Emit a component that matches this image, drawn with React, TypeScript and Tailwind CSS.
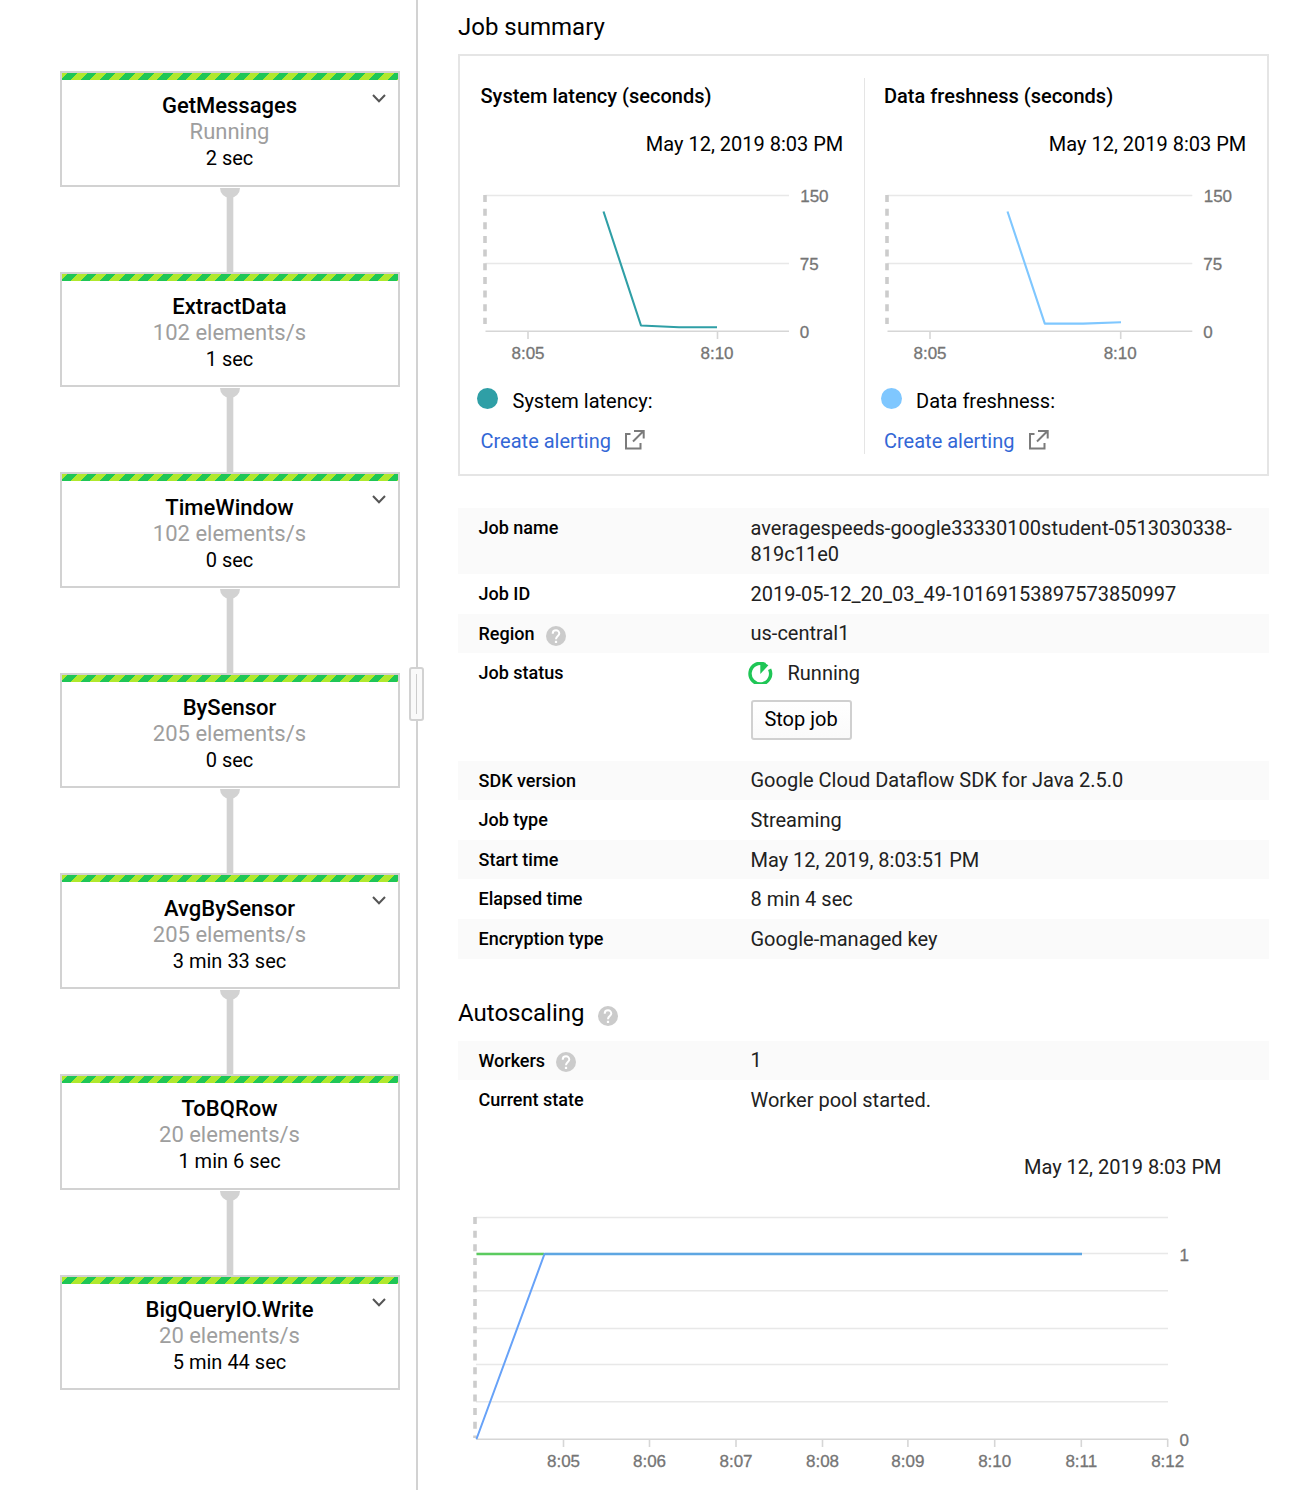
import React from "react";

const nodes = [
  { name: "GetMessages", rate: "Running", time: "2 sec", open: true },
  { name: "ExtractData", rate: "102 elements/s", time: "1 sec", open: false },
  { name: "TimeWindow", rate: "102 elements/s", time: "0 sec", open: true },
  { name: "BySensor", rate: "205 elements/s", time: "0 sec", open: false },
  { name: "AvgBySensor", rate: "205 elements/s", time: "3 min 33 sec", open: true },
  { name: "ToBQRow", rate: "20 elements/s", time: "1 min 6 sec", open: false },
  { name: "BigQueryIO.Write", rate: "20 elements/s", time: "5 min 44 sec", open: true },
];

function Node({ n, last }: { n: (typeof nodes)[number]; last: boolean }) {
  return (
    <>
      <div className="relative flex h-[115.6px] w-[340px] shrink-0 flex-col border-2 border-[#d2d2d2] text-center">
        <div className="h-[7px] shrink-0 bg-[repeating-linear-gradient(135deg,#b0e82d_0px,#b0e82d_4.1px,#1fc656_4.1px,#1fc656_10.9px,#b0e82d_10.9px,#b0e82d_13.58px)]" />
        <div className="mt-[13.4px] pr-px text-[22px] font-medium leading-[26px] text-black">{n.name}</div>
        <div className="pr-px text-[22px] leading-[26px] text-[#9e9e9e]">{n.rate}</div>
        <div className="pr-px text-[20px] leading-[27px] text-black">{n.time}</div>
        {n.open && (
          <svg className="absolute right-[12px] top-[20px]" width="14" height="11" viewBox="0 0 14 11">
            <path d="M1 2 L7 8.3 L13 2" fill="none" stroke="#555" strokeWidth="2" />
          </svg>
        )}
      </div>
      {!last && (
        <svg className="shrink-0" width="22" height="85" viewBox="0 0 22 85">
          <path d="M1 1 A10 10 0 0 0 21 1 Z" fill="#d2d2d2" />
          <rect x="7.7" y="10" width="6.6" height="76" fill="#d2d2d2" />
        </svg>
      )}
    </>
  );
}

function Help() {
  return (
    <svg width="20" height="20" viewBox="0 0 20 20" className="shrink-0">
      <circle cx="10" cy="10" r="10" fill="#cbcbcb" />
      <path d="M6.7 7.7 C6.7 3.2 13.3 3.2 13.3 7.6 C13.3 10 10 10.2 10 13.2" fill="none" stroke="#fff" strokeWidth="2" />
      <rect x="8.9" y="14.8" width="2.2" height="2.2" fill="#fff" />
    </svg>
  );
}

type MetricProps = {
  title: string;
  label: string;
  color: string;
  box: string;
  inset: string;
  dotInset: string;
  x0: number;
  end: number;
  tick: number;
  labelX: number;
  points: string;
};

function MetricCard({ title, label, color, box, inset, dotInset, x0, end, tick, labelX, points }: MetricProps) {
  return (
    <div className={`flex shrink-0 flex-col ${box}`}>
      <h3 className={`mt-[6px] text-[20px] font-medium leading-6 ${inset}`}>{title}</h3>
      <div className="mt-6 pr-[20.7px] text-right text-[20px] leading-6">May 12, 2019 8:03 PM</div>
      <svg className="mt-[21px] block" width="402" height="190" viewBox="0 177 402 190" fontFamily="Liberation Sans" fontSize="17" fill="#757575">
        <path d={`M${x0} 195.5 H${end} M${x0} 263.5 H${end}`} stroke="#e8e8e8" strokeWidth="1.5" />
        <path d={`M${x0} 331.3 H${end} M${x0 + 42.5} 331 V339 M${tick} 331 V339`} stroke="#d6d6d6" strokeWidth="1.6" />
        <path d={`M${x0 - 0.5} 195 V324`} stroke="#ccc" strokeWidth="3.6" strokeDasharray="7 6.65" />
        <path d={points} fill="none" stroke={color} strokeWidth="2.1" strokeLinejoin="round" />
        <g stroke="#757575" strokeWidth="0.3">
          <text x={labelX} y="202">150</text>
          <text x={labelX - 0.5} y="270">75</text>
          <text x={labelX - 0.5} y="338">0</text>
          <text x={x0 + 42.5} y="359" textAnchor="middle">8:05</text>
          <text x={tick - 0.5} y="359" textAnchor="middle">8:10</text>
        </g>
      </svg>
      <div className={`mt-[22px] flex h-6 items-center text-[20px] leading-6 ${dotInset}`}>
        <svg className="-mt-[5px] mr-[14.5px] block" width="21" height="21">
          <circle cx="10.5" cy="10.5" r="10.5" fill={color} />
        </svg>
        {label}
      </div>
      <div className={`mt-4 flex h-6 items-center text-[20px] leading-6 text-[#3367d6] ${inset}`}>
        Create alerting
        <svg className="-mt-[3px] ml-[14px] block" width="20" height="20" viewBox="0 0 20 20" fill="none" stroke="#7b7b7b" strokeWidth="2">
          <path d="M5.5 4 H1 V18.5 H15.5 V13 M9 1 H18.7 V8.5 M18 1.5 L8 11.5" />
        </svg>
      </div>
    </div>
  );
}

type RowProps = { label: string; help?: string; gray?: boolean; up?: boolean; h: string; children: React.ReactNode };

function Row({ label, help, gray, up, h, children }: RowProps) {
  return (
    <div className={`flex shrink-0 pl-[20.5px] pr-5 pt-[6px] ${h} ${gray ? "bg-[#fafafa]" : ""}`}>
      <div className="flex h-[26px] w-[272px] shrink-0 items-center gap-[11px] text-[18px] font-medium text-black">
        {label}
        {help && <span className={help}><Help /></span>}
      </div>
      <div className={`text-[20px] leading-[26px] text-[#212121] ${up ? "" : "pt-px"}`}>{children}</div>
    </div>
  );
}

const ticks: [string, number][] = [["8:05", 105.5], ["8:06", 191.5], ["8:07", 278], ["8:08", 364.5], ["8:09", 449.9], ["8:10", 536.7], ["8:11", 623.3], ["8:12", 709.7]];

export default function App() {
  return (
    <div className="flex h-[1490px] w-[1290px] overflow-hidden bg-white font-[Roboto,sans-serif] text-black">
      <div className="flex w-[416px] shrink-0 flex-col items-center pl-[44px] pt-[71px]">
        {nodes.map((n, i) => (
          <Node key={n.name} n={n} last={i === nodes.length - 1} />
        ))}
      </div>
      <div className="relative w-[2px] shrink-0 bg-[#d2d2d2]">
        <div className="absolute -left-[7px] top-[667px] flex h-[54px] w-[15px] justify-center rounded-[3px] border-2 border-[#d2d2d2] bg-[#fafafa] pt-[5px]">
          <div className="h-10 w-px bg-[#ccc]" />
        </div>
      </div>
      <div className="flex w-[851px] shrink-0 flex-col pl-10">
        <h2 className="mt-3 text-[24px] leading-[30px]">Job summary</h2>
        <div className="mt-3 flex h-[422px] shrink-0 border-2 border-[#e5e5e5] pb-5 pt-[22px]">
          <MetricCard title="System latency (seconds)" label="System latency:" color="#2f9fa6" box="w-[404px]" inset="pl-[20.5px]" dotInset="pl-[17px]" x0={25.5} end={329} tick={257.5} labelX={340.2} points="M143.5 211.5 L181 325.5 L219 327.2 H257" />
          <div className="w-px shrink-0 bg-[#e5e5e5]" />
          <MetricCard title="Data freshness (seconds)" label="Data freshness:" color="#7fc7ff" box="w-[402px]" inset="pl-[19px]" dotInset="pl-[15.5px]" x0={22.5} end={327.3} tick={255.7} labelX={338.7} points="M142.5 211.5 L179.8 323.6 H218 L256 322.2" />
        </div>
        <div className="mt-8 flex flex-col">
          <Row label="Job name" gray h="h-[66px]">averagespeeds-google33330100student-0513030338-<br />819c11e0</Row>
          <Row label="Job ID" h="h-[40px]">2019-05-12_20_03_49-10169153897573850997</Row>
          <Row label="Region" help="pt-[5px]" gray up h="h-[39px]">us-central1</Row>
          <Row label="Job status" h="h-[108px]">
            <div className="-ml-[3px] flex items-center">
              <svg className="mr-[15px] block" width="25" height="22" viewBox="0 0 25 22">
                <path d="M17.2 2.6 A10.3 10.3 0 1 0 21.6 7.2" fill="none" stroke="#1fc656" strokeWidth="3.4" />
                <path d="M12.3 0.4 Q17 0.2 20.4 3.3 L12.3 12 Z" fill="#1fc656" />
              </svg>
              Running
            </div>
            <button className="mt-[14px] block h-10 w-[101px] rounded-[3px] border-2 border-[#d0d0d0] bg-gradient-to-b from-white to-[#fafafa] pb-[2px] text-[20px] leading-[34px] text-black">Stop job</button>
          </Row>
          <Row label="SDK version" gray up h="h-[39px]">Google Cloud Dataflow SDK for Java 2.5.0</Row>
          <Row label="Job type" h="h-[40px]">Streaming</Row>
          <Row label="Start time" gray h="h-[39px]">May 12, 2019, 8:03:51 PM</Row>
          <Row label="Elapsed time" h="h-[40px]">8 min 4 sec</Row>
          <Row label="Encryption type" gray h="h-[40px]">Google-managed key</Row>
        </div>
        <h2 className="mt-[39px] flex h-[30px] items-center gap-[14px] text-[24px] leading-[30px]">
          Autoscaling <span className="pt-[6px]"><Help /></span>
        </h2>
        <div className="mt-[13px] flex flex-col">
          <Row label="Workers" help="pt-[3px]" gray up h="h-[39px]">1</Row>
          <Row label="Current state" h="h-[40px]">Worker pool started.</Row>
        </div>
        <div className="mt-[35px] pr-[47.5px] text-right text-[20px] leading-6 text-[#212121]">May 12, 2019 8:03 PM</div>
        <svg className="mt-[21px] block shrink-0" width="811" height="290" viewBox="0 1200 811 290" fontFamily="Liberation Sans" fontSize="17" fill="#757575">
          {[1217.5, 1253.5, 1290.7, 1328.5, 1364.5, 1401.7].map((y) => (
            <path key={y} d={`M18 ${y} H710`} stroke="#e8e8e8" strokeWidth="1.5" />
          ))}
          <path d="M18 1439.3 H710" stroke="#d6d6d6" strokeWidth="1.6" />
          <path d="M17 1217 V1438" stroke="#ccc" strokeWidth="3.6" strokeDasharray="7 6.65" />
          {ticks.map(([t, x]) => (
            <g key={t}>
              <path d={`M${x} 1439 V1447`} stroke="#d6d6d6" strokeWidth="1.6" />
              <text x={x} y="1467" textAnchor="middle" stroke="#757575" strokeWidth="0.3">{t}</text>
            </g>
          ))}
          <path d="M18.5 1254 H86" stroke="#5bcb5f" strokeWidth="2.3" />
          <path d="M18.5 1439 L86.5 1254 H624" fill="none" stroke="#67a2f8" strokeWidth="2" />
          <path d="M86.5 1254 H624" stroke="#5ea6e2" strokeWidth="2.4" />
          <text x="721.5" y="1261" stroke="#757575" strokeWidth="0.3">1</text>
          <text x="721.5" y="1446" stroke="#757575" strokeWidth="0.3">0</text>
        </svg>
      </div>
    </div>
  );
}
